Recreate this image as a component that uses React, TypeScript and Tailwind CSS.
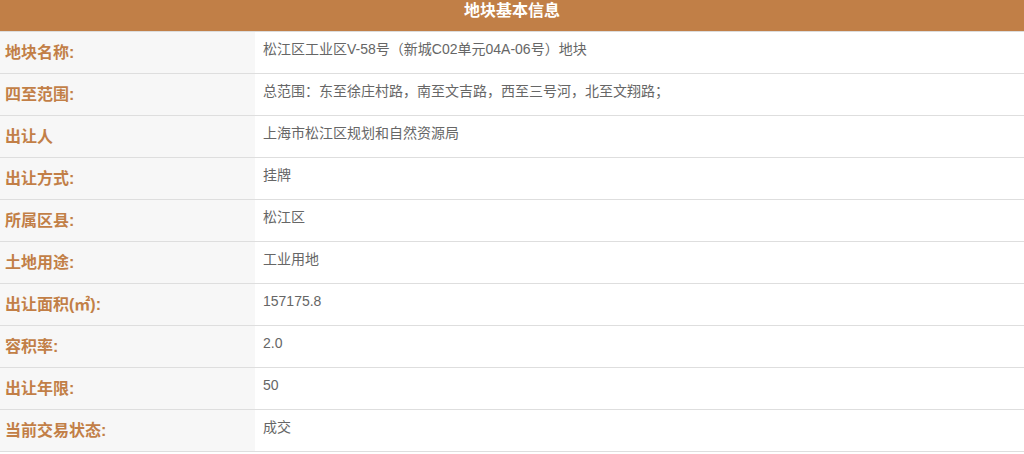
const rows: [string, string][] = [
  ['地块名称:', '松江区工业区V-58号（新城C02单元04A-06号）地块'],
  ['四至范围:', '总范围：东至徐庄村路，南至文吉路，西至三号河，北至文翔路；'],
  ['出让人', '上海市松江区规划和自然资源局'],
  ['出让方式:', '挂牌'],
  ['所属区县:', '松江区'],
  ['土地用途:', '工业用地'],
  ['出让面积(㎡):', '157175.8'],
  ['容积率:', '2.0'],
  ['出让年限:', '50'],
  ['当前交易状态:', '成交'],
];

export default function App() {
  return (
    <div
      className="w-[1024px] h-[454px] bg-white overflow-hidden"
      style={{ fontFamily: '"Liberation Sans", "Noto Sans CJK SC", sans-serif' }}
    >
      {/* Header */}
      <div className="h-[32px] bg-[#c17f47] border-b border-[#dcdcdc] text-center text-white font-bold text-[16px] leading-[22px]">
        地块基本信息
      </div>

      {/* Rows */}
      <div>
        {rows.map(([label, value]) => (
          <div key={label} className="flex h-[42px] border-b border-[#dedede]">
            <div className="w-[255px] shrink-0 bg-[#f7f7f7] pl-[5px] flex items-center pt-[1px] text-[16px] font-bold text-[#c27f47]">
              {label}
            </div>
            <div className="flex-1 pl-[8px] pt-[7px] text-[14px] leading-[21px] text-[#666666]">
              {value}
            </div>
          </div>
        ))}
      </div>
    </div>
  );
}
